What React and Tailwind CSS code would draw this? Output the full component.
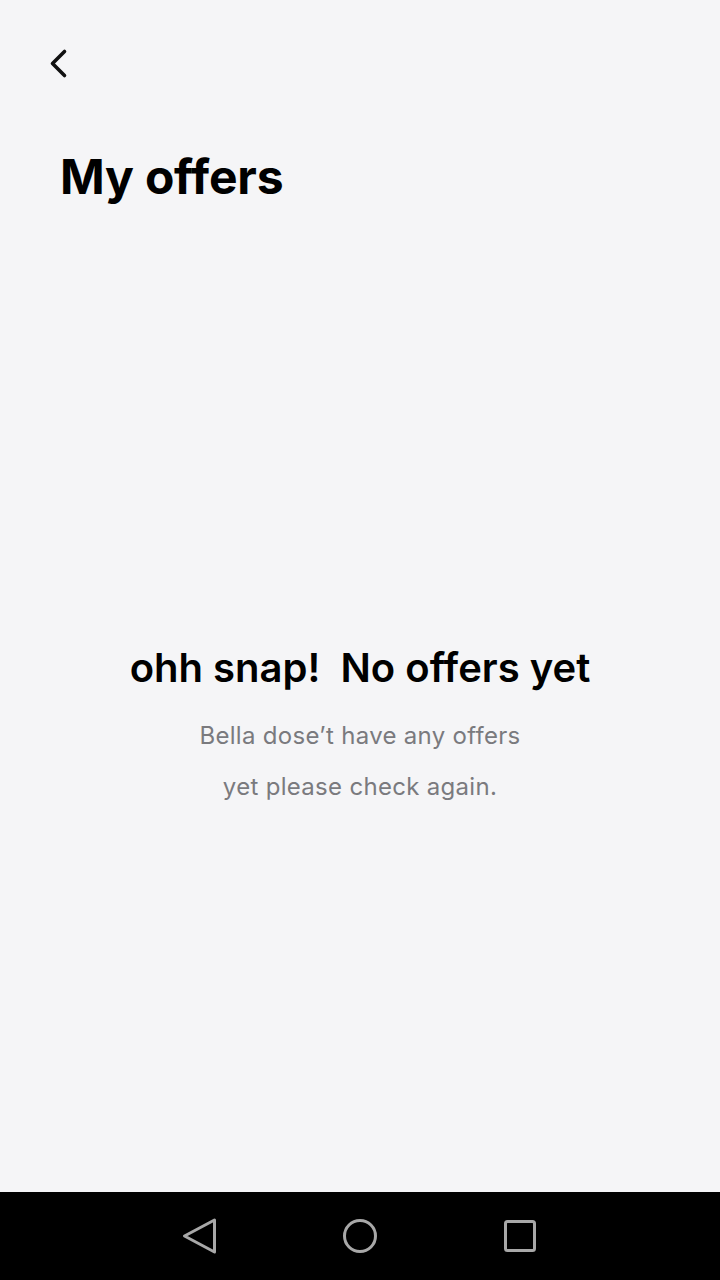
export default function App() {
  return (
    <div className="w-[720px] h-[1280px] flex flex-col bg-[#f5f5f7]" style={{ fontFamily: 'Inter, "Noto Sans", sans-serif' }}>
      <div className="flex-1 flex flex-col">
        <div className="h-[148px] pl-[47px] pt-[47px]">
          <svg width="22" height="32" viewBox="0 0 22 32" fill="none">
            <path d="M17.5 4.5 L5.5 16.5 L17.5 28.5" stroke="#111" strokeWidth="3.6" strokeLinecap="round" strokeLinejoin="round" />
          </svg>
        </div>
        <h1 className="pl-[60px] text-[48px] font-bold text-black leading-[58px] tracking-[-0.2px]">My offers</h1>
        <div className="flex-1 flex flex-col items-center pt-[437px]">
          <div className="text-[40px] font-semibold text-black leading-[50px] whitespace-pre">ohh snap!  No offers yet</div>
          <div className="mt-[17px] text-[24px] text-[#7a7a7e] leading-[51px] text-center tracking-[0.3px]">
            <div>Bella dose’t have any offers</div>
            <div>yet please check again.</div>
          </div>
        </div>
      </div>
      <div className="h-[88px] bg-black flex items-center justify-center gap-[120px]">
        <svg width="40" height="40" viewBox="0 0 40 40" fill="none">
          <path d="M34.5 4 L4.5 20 L34.5 36 Z" stroke="#a8a8a8" strokeWidth="3" strokeLinejoin="round" />
        </svg>
        <svg width="40" height="40" viewBox="0 0 40 40" fill="none">
          <circle cx="20" cy="20" r="15.5" stroke="#a8a8a8" strokeWidth="3" />
        </svg>
        <svg width="40" height="40" viewBox="0 0 40 40" fill="none">
          <rect x="5.5" y="5.5" width="29" height="29" rx="2" stroke="#a8a8a8" strokeWidth="3" />
        </svg>
      </div>
    </div>
  );
}
